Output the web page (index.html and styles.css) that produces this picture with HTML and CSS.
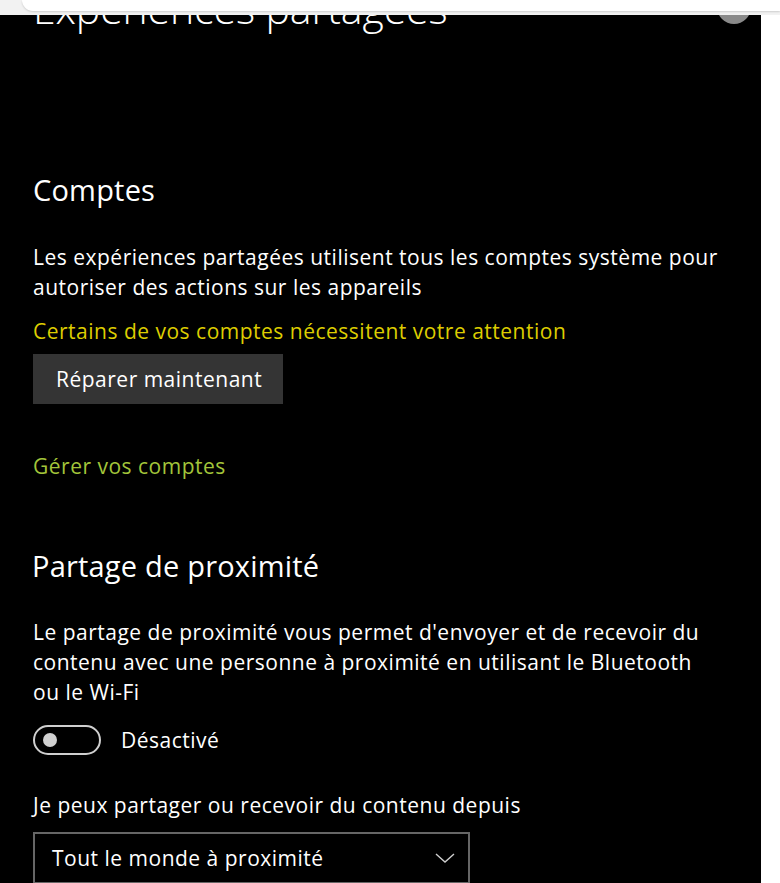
FILE: index.html
```html
<!DOCTYPE html>
<html lang="fr">
<head>
    <meta charset="UTF-8">
    <meta name="viewport" content="width=device-width, initial-scale=1.0">
    <title>Expériences partagées</title>
    <link rel="stylesheet" href="styles.css">
</head>
<body>

    <div class="topbar">
        <div class="search"></div>
    </div>

    <div class="layout">
        <main class="panel">

            <div class="page-head">
                <h1>Expériences partagées</h1>
                <span class="avatar"></span>
            </div>

            <section class="group accounts">
                <h2>Comptes</h2>
                <p>Les expériences partagées utilisent tous les comptes système pour autoriser des actions sur les appareils</p>
                <p class="warning">Certains de vos comptes nécessitent votre attention</p>
                <button class="btn">Réparer maintenant</button>
                <a class="link" href="#">Gérer vos comptes</a>
            </section>

            <section class="group nearby">
                <h2>Partage de proximité</h2>
                <p>Le partage de proximité vous permet d'envoyer et de recevoir du contenu avec une personne à proximité en utilisant le Bluetooth ou le Wi-Fi</p>

                <div class="toggle-row">
                    <span class="toggle"><span class="knob"></span></span>
                    <span>Désactivé</span>
                </div>

                <label class="field-label">Je peux partager ou recevoir du contenu depuis</label>
                <div class="select">
                    <span>Tout le monde à proximité</span>
                    <svg width="20" height="10" viewBox="0 0 20 10">
                        <path d="M1 1 L10 9 L19 1" fill="none" stroke="#cfcfcf" stroke-width="1.4"/>
                    </svg>
                </div>
            </section>

        </main>
    </div>

</body>
</html>
```

FILE: styles.css
```css
body {
    margin: 0;
    background-color: #fff;
    font-family: "Open Sans", "Noto Sans", sans-serif;
    color: #fff;
    height: 883px;
    overflow: hidden;
}
.topbar {
    height: 15px;
    background-color: #f2f2f2;
    position: relative;
    z-index: 2;
}
.search {
    margin-left: 22px;
    height: 11px;
    background-color: #fff;
    border-bottom-left-radius: 12px;
    box-shadow: 0 1px 2px rgba(0, 0, 0, 0.15);
}
.layout {
    display: flex;
}
.panel {
    width: 761px;
    height: 868px;
    background-color: #000;
    overflow: hidden;
    padding-left: 33px;
    box-sizing: border-box;
}
.page-head {
    display: flex;
    justify-content: space-between;
    align-items: flex-start;
    margin-top: -35px;
}
h1 {
    margin: 0;
    font-weight: 300;
    font-size: 41px;
    line-height: 56px;
    letter-spacing: -0.1px;
}
.avatar {
    width: 34px;
    height: 34px;
    border-radius: 50%;
    background-color: #8a8a8a;
    margin-right: 10px;
    margin-top: 10px;
}
.group {
    display: flex;
    flex-direction: column;
    align-items: flex-start;
}
.accounts {
    margin-top: 134px;
}
.nearby {
    margin-top: 65px;
}
h2 {
    margin: 0 0 32px 0;
    font-weight: 400;
    font-size: 29px;
    line-height: 40px;
    letter-spacing: 0.2px;
}
.nearby h2 {
    margin-bottom: 31px;
    margin-left: -1px;
}
p, .link, .toggle-row, .field-label, .select, .btn {
    font-size: 21px;
    letter-spacing: 0.5px;
}
p {
    margin: 0;
    line-height: 30px;
    max-width: 690px;
}
.warning {
    color: #ddcd00;
    margin-top: 14px;
}
.btn {
    margin-top: 8px;
    width: 250px;
    height: 50px;
    background-color: #343434;
    color: #fff;
    border: none;
    font-family: inherit;
    text-align: left;
    padding: 0 0 0 23px;
}
.link {
    margin-top: 47px;
    color: #a3c53a;
    text-decoration: none;
    line-height: 30px;
}
.toggle-row {
    display: flex;
    align-items: center;
    gap: 20px;
    margin-top: 18px;
}
.toggle {
    width: 68px;
    height: 30px;
    box-sizing: border-box;
    border: 2px solid #cfcfcf;
    border-radius: 15px;
    display: flex;
    align-items: center;
    padding-left: 8px;
}
.knob {
    width: 14px;
    height: 14px;
    border-radius: 50%;
    background-color: #d0d0d0;
}
.field-label {
    margin-top: 35px;
    line-height: 30px;
}
.select {
    margin-top: 12px;
    width: 437px;
    height: 52px;
    box-sizing: border-box;
    border: 2px solid #666;
    display: flex;
    align-items: center;
    justify-content: space-between;
    padding: 0 13px 0 17px;
}
```
